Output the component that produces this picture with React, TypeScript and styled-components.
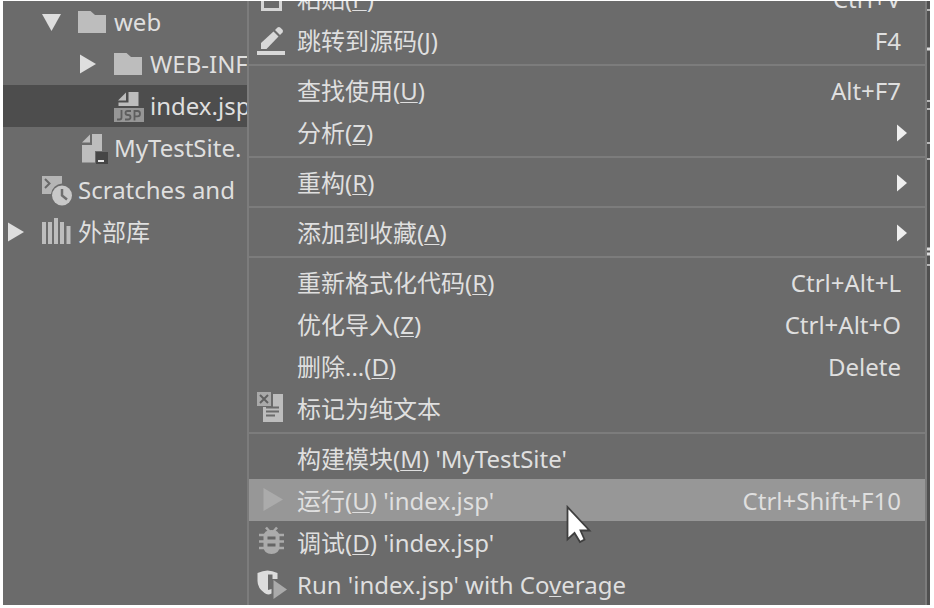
import React from "react";
import styled, { createGlobalStyle } from "styled-components";

const GlobalStyle = createGlobalStyle`
  * {
    box-sizing: border-box;
  }
  body {
    margin: 0;
    background: #ffffff;
    color: #dfdfdf;
    font-family: "Noto Sans", "Noto Sans CJK SC", sans-serif;
    font-size: 24px;
    line-height: 32px;
  }
`;

const Page = styled.div`
  height: 100vh;
  padding: 1px 4px 3px 3px;
`;

const Workspace = styled.div`
  display: grid;
  grid-template-columns: 244px minmax(0, 1fr) 3px;
  height: 100%;
  overflow: hidden;
  background: #6b6b6b;
`;

const Tree = styled.ul`
  margin: 0;
  padding: 0;
  list-style: none;
  overflow: hidden;
`;

const TreeRow = styled.li<{ $level: number; $selected?: boolean }>`
  display: flex;
  align-items: center;
  height: 42px;
  padding-left: ${(p) => 3 + p.$level * 36}px;
  white-space: nowrap;
  background: ${(p) => (p.$selected ? "#4d4d4d" : "transparent")};
`;

const Toggle = styled.button`
  flex: none;
  width: 20px;
  height: 20px;
  margin-right: 16px;
  padding: 0;
  border: 0;
  background: none;
  svg {
    display: block;
  }
`;

const ToggleSpace = styled.span`
  flex: none;
  width: 36px;
`;

const TreeIcon = styled.svg`
  flex: none;
  width: 30px;
  height: 32px;
  margin-right: 6px;
`;

const Menu = styled.div`
  align-self: start;
  margin-top: -24px;
  border: solid #7c7c7c;
  border-width: 0 2px;
  background: #6b6b6b;
`;

const Item = styled.button<{ $active?: boolean }>`
  position: relative;
  display: flex;
  align-items: center;
  width: 100%;
  height: 42px;
  padding: 2px 18px 0 8px;
  border: 0;
  background: ${(p) => (p.$active ? "#979797" : "transparent")};
  color: inherit;
  font: inherit;
  text-align: left;
  white-space: nowrap;
  u {
    text-decoration-thickness: 1px;
    text-underline-offset: 2px;
    text-decoration-skip-ink: none;
  }
`;

const IconSlot = styled.span`
  flex: none;
  width: 30px;
  height: 36px;
  margin-right: 10px;
  svg {
    display: block;
  }
`;

const Label = styled.span`
  flex: 1;
`;

const Shortcut = styled.span`
  padding-right: 6px;
`;

const Separator = styled.hr`
  height: 2px;
  margin: 3px 0;
  border: 0;
  background: #7c7c7c;
`;

const Pointer = styled.svg`
  position: absolute;
  left: 317px;
  top: 26px;
  z-index: 1;
`;

const EditorEdge = styled.div`
  background: #505050;
  svg {
    display: block;
  }
`;

type ArrowProps = { open?: boolean };

function TreeArrow({ open }: ArrowProps) {
  return (
    <Toggle aria-label={open ? "Collapse" : "Expand"}>
      <svg width="20" height="20" viewBox="0 0 20 20" fill="#dedede">
        <path d={open ? "M0 2H19L9.5 19Z" : "M2 0.5V19.5L18 10Z"} />
      </svg>
    </Toggle>
  );
}

function FolderIcon() {
  return (
    <TreeIcon viewBox="0 0 30 32" fill="#bdbdbd">
      <path d="M0 5H12.500L17 9H28V27H0Z" />
    </TreeIcon>
  );
}

function JspIcon() {
  return (
    <TreeIcon viewBox="0 0 30 32">
      <path d="M14.500 2H24.500V16H4.500V12.500H14.500Z" fill="#bdbdbd" />
      <path d="M12 2.500V10.500H4Z" fill="#bdbdbd" />
      <rect y="18" width="30" height="14" fill="#969696" />
      <g fill="none" stroke="#5e5e5e" strokeWidth="1.800">
        <path d="M7.500 20V27.500Q7.500 29.500 5.500 29.500H3" />
        <path d="M17 21H13.500Q11.500 21 11.500 23Q11.500 25 14 25Q16.500 25 16.500 27.300Q16.500 29.500 14 29.500H11" />
        <path d="M20.500 30.500V21H23.500Q26 21 26 23.700Q26 26.300 23.500 26.300H20.500" />
      </g>
    </TreeIcon>
  );
}

function ModuleFileIcon() {
  return (
    <TreeIcon viewBox="0 0 30 32">
      <path d="M14 2H24V19H17V30.500H4V13H14Z" fill="#bdbdbd" />
      <path d="M12 2.500V10.500H4Z" fill="#bdbdbd" />
      <rect x="18" y="20" width="12" height="12" fill="#464646" />
      <rect x="20" y="28" width="6" height="2" fill="#e8e8e8" />
    </TreeIcon>
  );
}

function ScratchesIcon() {
  return (
    <TreeIcon viewBox="0 0 30 32">
      <path
        d="M0 2H20V9.500A11.500 11.500 0 0 0 9 20H0Z"
        fill="#b5b5b5"
      />
      <path d="M3 5L7.500 9.500L3 14" fill="none" stroke="#686868" strokeWidth="2" />
      <circle cx="20" cy="21.500" r="10" fill="#c8c8c8" />
      <path d="M20 15V21.500L25 25.500" fill="none" stroke="#6f6f6f" strokeWidth="2.500" />
    </TreeIcon>
  );
}

function LibraryIcon() {
  return (
    <TreeIcon viewBox="0 0 30 32" fill="#bdbdbd">
      <path d="M0 6H4V28H0ZM6 6H10V28H6ZM12 2H16V28H12ZM18 6H22V28H18ZM24.500 10H28.500V28H24.500Z" />
    </TreeIcon>
  );
}

function PasteIcon() {
  return (
    <svg width="30" height="36" viewBox="0 0 30 36">
      <rect x="5.500" y="9" width="18" height="19.500" fill="none" stroke="#d5d5d5" strokeWidth="3" />
      <rect x="10" y="4" width="9" height="7" fill="#d5d5d5" />
    </svg>
  );
}

function EditIcon() {
  return (
    <svg width="30" height="36" viewBox="0 0 30 36" fill="#d8d8d8">
      <path d="M4 26V20L16.500 8.500L21.500 13.500L9.500 26Z" />
      <path d="M18 7L20.500 4.500Q22 3.500 23.500 4.700L25.500 6.700Q26.500 8 25.500 9.500L23 12Z" />
      <rect x="0" y="28" width="28" height="4" />
    </svg>
  );
}

function PlainTextIcon() {
  return (
    <svg width="30" height="36" viewBox="0 0 30 36">
      <path d="M16 3H26V31H6V16H16Z" fill="#bdbdbd" />
      <path d="M9 16.500H22M9 20.500H22M9 24.500H18" stroke="#6b6b6b" strokeWidth="1.800" />
      <rect width="14" height="14" y="1" fill="#a9a9a9" />
      <path d="M3 4L11 12M11 4L3 12" stroke="#606060" strokeWidth="2" />
    </svg>
  );
}

function RunIcon() {
  return (
    <svg width="30" height="36" viewBox="0 0 30 36">
      <path d="M6.500 5L26 16.500L6.500 28Z" fill="#ababab" />
    </svg>
  );
}

function BugIcon() {
  return (
    <svg width="30" height="36" viewBox="0 0 30 36">
      <g fill="none" stroke="#ababab" strokeWidth="2.600">
        <path d="M9 2.500L13 7M20 2.500L16 7M2 10H27M2 16.500H27M2 23H27" />
      </g>
      <path
        d="M6.500 11Q7 5 14.500 5Q22 5 22.500 11V22Q22 29 14.500 29Q7 29 6.500 22Z"
        fill="#ababab"
      />
      <path d="M10.500 13H18.500M10.500 20H18.500" stroke="#656565" strokeWidth="3" />
    </svg>
  );
}

function CoverageIcon() {
  return (
    <svg width="30" height="36" viewBox="0 0 30 36">
      <path
        d="M0.500 6Q6 3.500 10.500 3.500Q15 3.500 20.500 6V12H15.500V7.500H11V23L14.500 22V26.500Q10.500 28.500 7.500 26Q0.500 21 0.500 14Z"
        fill="#dddddd"
      />
      <path d="M16.500 13L30 22.500L16.500 32Z" fill="#aaaaaa" />
    </svg>
  );
}

function SubmenuArrow() {
  return (
    <svg width="10" height="18" viewBox="0 0 10 18" fill="#efefef">
      <path d="M0 0.500L10 9L0 17.500Z" />
    </svg>
  );
}

type MenuItemProps = {
  icon?: React.ReactNode;
  shortcut?: string;
  submenu?: boolean;
  active?: boolean;
  children: React.ReactNode;
};

function MenuItem({ icon, shortcut, submenu, active, children }: MenuItemProps) {
  return (
    <Item role="menuitem" $active={active} aria-haspopup={submenu ? "menu" : undefined}>
      <IconSlot>{icon}</IconSlot>
      <Label>{children}</Label>
      {shortcut && <Shortcut>{shortcut}</Shortcut>}
      {submenu && <SubmenuArrow />}
      {active && (
        <Pointer width="26" height="40" viewBox="0 0 26 40">
          <path
            d="M1.500 2V34.500L8.500 28L14 37L18.500 34.500L14.500 25.500H23.500Z"
            fill="#ffffff"
            stroke="#3f3f3f"
            strokeWidth="1.800"
          />
        </Pointer>
      )}
    </Item>
  );
}

export default function App() {
  return (
    <Page>
      <GlobalStyle />
      <Workspace>
        <Tree>
          <TreeRow $level={1}>
            <TreeArrow open />
            <FolderIcon />
            web
          </TreeRow>
          <TreeRow $level={2}>
            <TreeArrow />
            <FolderIcon />
            WEB-INF
          </TreeRow>
          <TreeRow $level={2} $selected>
            <ToggleSpace />
            <JspIcon />
            index.jsp
          </TreeRow>
          <TreeRow $level={1}>
            <ToggleSpace />
            <ModuleFileIcon />
            MyTestSite.
          </TreeRow>
          <TreeRow $level={0}>
            <ToggleSpace />
            <ScratchesIcon />
            Scratches and
          </TreeRow>
          <TreeRow $level={0}>
            <TreeArrow />
            <LibraryIcon />
            外部库
          </TreeRow>
        </Tree>

        <Menu role="menu">
          <MenuItem icon={<PasteIcon />} shortcut="Ctrl+V">
            粘贴(<u>P</u>)
          </MenuItem>
          <MenuItem icon={<EditIcon />} shortcut="F4">
            跳转到源码(J)
          </MenuItem>
          <Separator />
          <MenuItem shortcut="Alt+F7">
            查找使用(<u>U</u>)
          </MenuItem>
          <MenuItem submenu>
            分析(<u>Z</u>)
          </MenuItem>
          <Separator />
          <MenuItem submenu>
            重构(<u>R</u>)
          </MenuItem>
          <Separator />
          <MenuItem submenu>
            添加到收藏(<u>A</u>)
          </MenuItem>
          <Separator />
          <MenuItem shortcut="Ctrl+Alt+L">
            重新格式化代码(<u>R</u>)
          </MenuItem>
          <MenuItem shortcut="Ctrl+Alt+O">
            优化导入(<u>Z</u>)
          </MenuItem>
          <MenuItem shortcut="Delete">
            删除...(<u>D</u>)
          </MenuItem>
          <MenuItem icon={<PlainTextIcon />}>标记为纯文本</MenuItem>
          <Separator />
          <MenuItem>
            构建模块(<u>M</u>) 'MyTestSite'
          </MenuItem>
          <MenuItem icon={<RunIcon />} shortcut="Ctrl+Shift+F10" active>
            运行(<u>U</u>) 'index.jsp'
          </MenuItem>
          <MenuItem icon={<BugIcon />}>
            调试(<u>D</u>) 'index.jsp'
          </MenuItem>
          <MenuItem icon={<CoverageIcon />}>
            Run 'index.jsp' with Co<u>v</u>erage
          </MenuItem>
        </Menu>

        <EditorEdge aria-hidden="true">
          <svg width="3" height="270" viewBox="0 0 3 270" stroke="#b8b8b8" strokeWidth="2">
            <path d="M0 9H3M0 100H3M0 108H3M0 142H3M0 158H3M0 264H3" />
            <path d="M0 48H3M0 248H3M0 253H3" strokeWidth="3" stroke="#dddddd" />
          </svg>
        </EditorEdge>
      </Workspace>
    </Page>
  );
}
